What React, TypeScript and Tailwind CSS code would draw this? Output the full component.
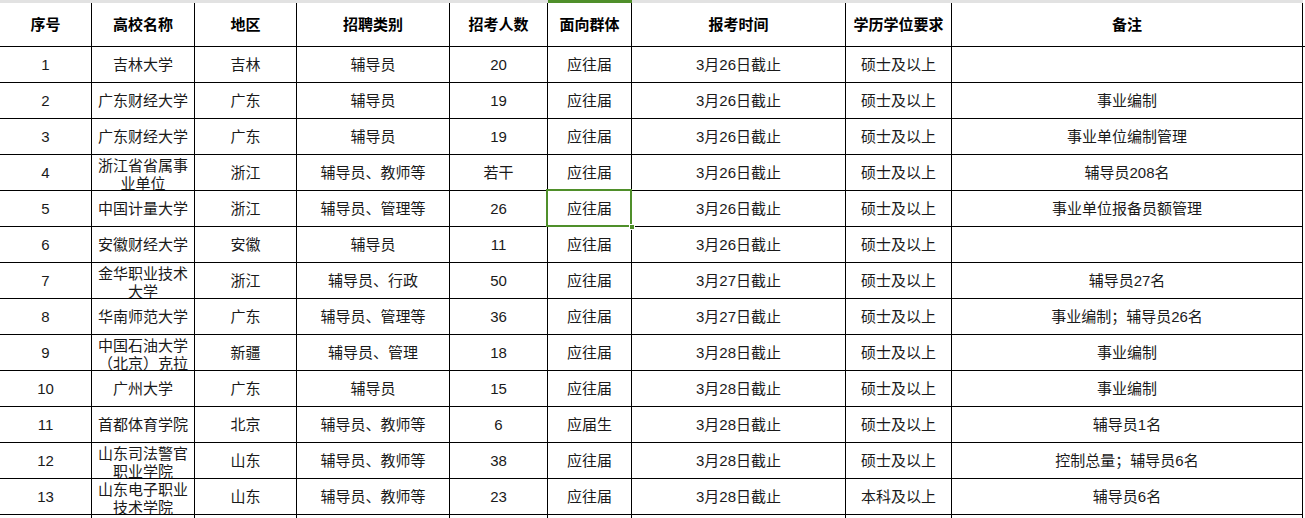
import React from "react";

type Row = {
  n: string;
  name: string[];
  region: string;
  cat: string;
  count: string;
  group: string;
  time: string;
  edu: string;
  note: string;
};

const rows: Row[] = [
  { n: "1", name: ["吉林大学"], region: "吉林", cat: "辅导员", count: "20", group: "应往届", time: "3月26日截止", edu: "硕士及以上", note: "" },
  { n: "2", name: ["广东财经大学"], region: "广东", cat: "辅导员", count: "19", group: "应往届", time: "3月26日截止", edu: "硕士及以上", note: "事业编制" },
  { n: "3", name: ["广东财经大学"], region: "广东", cat: "辅导员", count: "19", group: "应往届", time: "3月26日截止", edu: "硕士及以上", note: "事业单位编制管理" },
  { n: "4", name: ["浙江省省属事", "业单位"], region: "浙江", cat: "辅导员、教师等", count: "若干", group: "应往届", time: "3月26日截止", edu: "硕士及以上", note: "辅导员208名" },
  { n: "5", name: ["中国计量大学"], region: "浙江", cat: "辅导员、管理等", count: "26", group: "应往届", time: "3月26日截止", edu: "硕士及以上", note: "事业单位报备员额管理" },
  { n: "6", name: ["安徽财经大学"], region: "安徽", cat: "辅导员", count: "11", group: "应往届", time: "3月26日截止", edu: "硕士及以上", note: "" },
  { n: "7", name: ["金华职业技术", "大学"], region: "浙江", cat: "辅导员、行政", count: "50", group: "应往届", time: "3月27日截止", edu: "硕士及以上", note: "辅导员27名" },
  { n: "8", name: ["华南师范大学"], region: "广东", cat: "辅导员、管理等", count: "36", group: "应往届", time: "3月27日截止", edu: "硕士及以上", note: "事业编制；辅导员26名" },
  { n: "9", name: ["中国石油大学", "（北京）克拉"], region: "新疆", cat: "辅导员、管理", count: "18", group: "应往届", time: "3月28日截止", edu: "硕士及以上", note: "事业编制" },
  { n: "10", name: ["广州大学"], region: "广东", cat: "辅导员", count: "15", group: "应往届", time: "3月28日截止", edu: "硕士及以上", note: "事业编制" },
  { n: "11", name: ["首都体育学院"], region: "北京", cat: "辅导员、教师等", count: "6", group: "应届生", time: "3月28日截止", edu: "硕士及以上", note: "辅导员1名" },
  { n: "12", name: ["山东司法警官", "职业学院"], region: "山东", cat: "辅导员、教师等", count: "38", group: "应往届", time: "3月28日截止", edu: "硕士及以上", note: "控制总量；辅导员6名" },
  { n: "13", name: ["山东电子职业", "技术学院"], region: "山东", cat: "辅导员、教师等", count: "23", group: "应往届", time: "3月28日截止", edu: "本科及以上", note: "辅导员6名" },
];

const headers = ["序号", "高校名称", "地区", "招聘类别", "招考人数", "面向群体", "报考时间", "学历学位要求", "备注"];

const gridCols = "grid grid-cols-[92px_103px_102px_153px_98px_84px_214px_106px_351px]";

function Cell({ children }: { children?: React.ReactNode }) {
  return (
    <div className="h-[36px] pt-[2px] border-b border-r border-black flex items-center justify-center overflow-hidden whitespace-nowrap">
      {children}
    </div>
  );
}

export default function App() {
  return (
    <div
      className="w-[1305px] h-[518px] overflow-hidden bg-white text-[15px] text-[#1a1a1a]"
      style={{ fontFamily: '"Liberation Sans", "Noto Sans CJK SC", sans-serif' }}
    >
      {/* top band */}
      <div className={`${gridCols} h-[3px]`}>
        <div className="bg-[#e2e2e2]" />
        <div className="bg-[#e2e2e2]" />
        <div className="bg-[#e2e2e2]" />
        <div className="bg-[#e2e2e2]" />
        <div className="bg-[#e2e2e2]" />
        <div className="bg-[#4f8f2a]" />
        <div className="bg-[#e2e2e2]" />
        <div className="bg-[#e2e2e2]" />
        <div className="bg-[#e2e2e2]" />
      </div>
      <div className="flex">
        <div className={gridCols}>
          {headers.map((h) => (
            <div
              key={h}
              className="h-[44px] pt-[2px] border-b border-r border-black flex items-center justify-center font-bold text-black"
            >
              {h}
            </div>
          ))}
        </div>
        <div className="flex-1 h-[44px] border-b border-black" />
      </div>
      <div className={gridCols}>
        {rows.map((r) => (
          <React.Fragment key={r.n}>
            <Cell>{r.n}</Cell>
            {r.name.length > 1 ? (
              <div className="h-[36px] border-b border-r border-black overflow-hidden flex flex-col items-center pt-[2px] leading-[18px] whitespace-nowrap">
                {r.name.map((l) => (
                  <div key={l}>{l}</div>
                ))}
              </div>
            ) : (
              <Cell>{r.name[0]}</Cell>
            )}
            <Cell>{r.region}</Cell>
            <Cell>{r.cat}</Cell>
            <Cell>{r.count}</Cell>
            {r.n === "5" ? (
              <div className="relative h-[36px] pt-[2px] border-b border-r border-black flex items-center justify-center">
                {r.group}
                <div className="absolute z-10 left-[-2px] top-[-2px] w-[86px] h-[38px] border-[2px] border-solid border-[#4f8f2a]" />
                <div className="absolute z-20 right-[-4px] bottom-[-4px] w-[6px] h-[6px] bg-[#4f8f2a] border border-white" />
              </div>
            ) : (
              <Cell>{r.group}</Cell>
            )}
            <Cell>{r.time}</Cell>
            <Cell>{r.edu}</Cell>
            <Cell>{r.note}</Cell>
          </React.Fragment>
        ))}
        {headers.map((h) => (
          <div key={"e" + h} className="h-[36px] border-r border-black" />
        ))}
      </div>
    </div>
  );
}
